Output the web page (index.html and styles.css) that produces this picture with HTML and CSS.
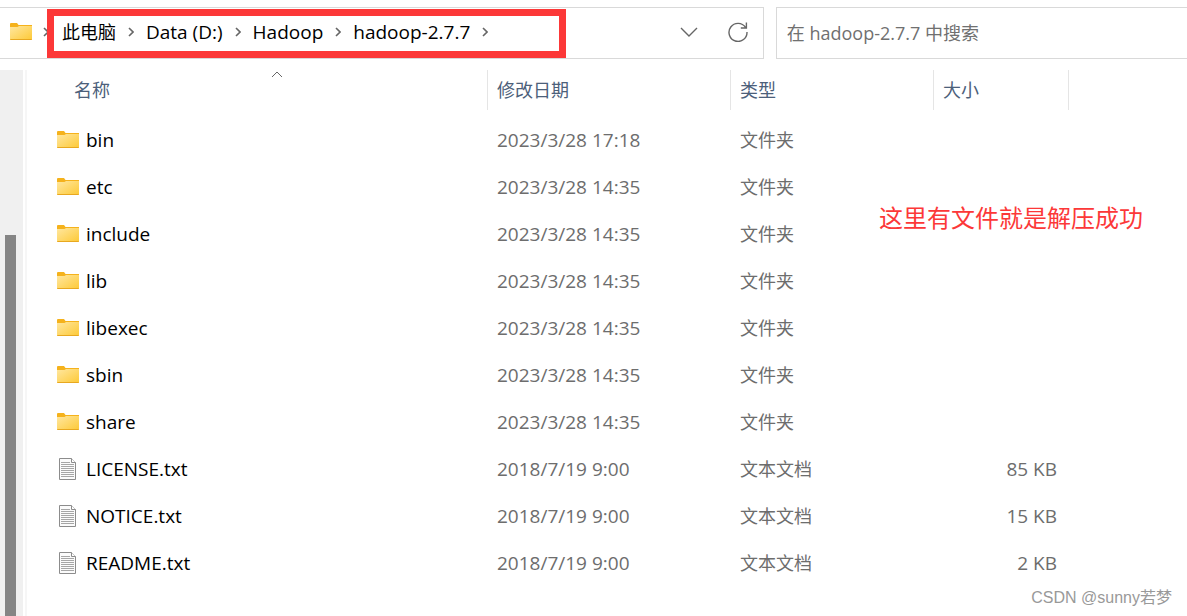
FILE: index.html
```html
<!DOCTYPE html>
<html lang="zh-CN">
<head>
    <meta charset="UTF-8">
    <meta name="viewport" content="width=device-width, initial-scale=1.0">
    <title>hadoop-2.7.7</title>
    <link rel="stylesheet" href="styles.css">
</head>
<body>
    <!-- shared icons -->
    <svg class="sprite" aria-hidden="true">
        <defs>
            <linearGradient id="folderFill" x1="0" y1="0" x2="1" y2="1">
                <stop offset="0" stop-color="#ffe7a0"/>
                <stop offset="1" stop-color="#fdc936"/>
            </linearGradient>
            <symbol id="folder" viewBox="0 0 22 17">
                <path d="M0 1q0-1 1-1h6l1.500 2H22v3H0z" fill="#f5b21c"/>
                <path d="M0 4h7.500L9 3h13v13q0 1-1 1H1q-1 0-1-1z" fill="url(#folderFill)"/>
                <path d="M0 16h22q0 1-1 1H1q-1 0-1-1z" fill="#e8a820"/>
            </symbol>
            <symbol id="text" viewBox="0 0 17 22">
                <path d="M.5.5h12l4 4v17H.5z" fill="#fbfbfb" stroke="#8c8c8c"/>
                <path d="M12.5.5v4h4" fill="#fff" stroke="#8c8c8c"/>
                <path d="M2 4.500h9M2 6.500h13M2 8.500h13M2 10.500h13M2 12.500h13M2 14.500h13M2 16.500h13M2 18.500h13" stroke="#a6a6a6"/>
            </symbol>
            <symbol id="chevron" viewBox="0 0 6 10">
                <path d="M1 1l4 4-4 4" fill="none" stroke="#666" stroke-width="1.6"/>
            </symbol>
        </defs>
    </svg>

    <header class="toolbar">
        <div class="address">
            <svg class="folder-icon"><use href="#folder"/></svg>
            <svg class="chevron first"><use href="#chevron"/></svg>
            <nav class="crumbs">
                <a class="zh" href="#">此电脑</a>
                <svg class="chevron"><use href="#chevron"/></svg>
                <a href="#">Data (D:)</a>
                <svg class="chevron"><use href="#chevron"/></svg>
                <a href="#">Hadoop</a>
                <svg class="chevron"><use href="#chevron"/></svg>
                <a href="#">hadoop-2.7.7</a>
                <svg class="chevron"><use href="#chevron"/></svg>
            </nav>
            <div class="actions">
                <button type="button" aria-label="历史记录">
                    <svg width="18" height="10" viewBox="0 0 18 10"><path d="M1 1l8 8 8-8" fill="none" stroke="#666" stroke-width="1.4"/></svg>
                </button>
                <button type="button" aria-label="刷新">
                    <svg width="20" height="20" viewBox="0 0 20 20"><path d="M17.500 5.400A9 9 0 1 0 19 10M18.400 .5v5.500h-5.600" fill="none" stroke="#666" stroke-width="1.4"/></svg>
                </button>
            </div>
        </div>
        <input class="search" type="search" placeholder="在 hadoop-2.7.7 中搜索" aria-label="搜索">
    </header>

    <main class="content">
        <div class="scrollbar"><div class="thumb"></div></div>
        <table class="files">
            <colgroup>
                <col class="col-name">
                <col class="col-date">
                <col class="col-type">
                <col class="col-size">
            </colgroup>
            <thead>
                <tr>
                    <th class="sorted">
                        <button type="button">名称
                            <svg class="caret" viewBox="0 0 12 7"><path d="M1 6l5-5 5 5" fill="none" stroke="#666"/></svg>
                        </button>
                    </th>
                    <th><button type="button">修改日期</button></th>
                    <th><button type="button">类型</button></th>
                    <th><button type="button">大小</button></th>
                </tr>
            </thead>
            <tbody>
                <tr><td><div class="name"><svg class="folder-icon"><use href="#folder"/></svg>bin</div></td><td>2023/3/28 17:18</td><td class="zh">文件夹</td><td></td></tr>
                <tr><td><div class="name"><svg class="folder-icon"><use href="#folder"/></svg>etc</div></td><td>2023/3/28 14:35</td><td class="zh">文件夹</td><td></td></tr>
                <tr><td><div class="name"><svg class="folder-icon"><use href="#folder"/></svg>include</div></td><td>2023/3/28 14:35</td><td class="zh">文件夹</td><td></td></tr>
                <tr><td><div class="name"><svg class="folder-icon"><use href="#folder"/></svg>lib</div></td><td>2023/3/28 14:35</td><td class="zh">文件夹</td><td></td></tr>
                <tr><td><div class="name"><svg class="folder-icon"><use href="#folder"/></svg>libexec</div></td><td>2023/3/28 14:35</td><td class="zh">文件夹</td><td></td></tr>
                <tr><td><div class="name"><svg class="folder-icon"><use href="#folder"/></svg>sbin</div></td><td>2023/3/28 14:35</td><td class="zh">文件夹</td><td></td></tr>
                <tr><td><div class="name"><svg class="folder-icon"><use href="#folder"/></svg>share</div></td><td>2023/3/28 14:35</td><td class="zh">文件夹</td><td></td></tr>
                <tr><td><div class="name"><svg class="text-icon"><use href="#text"/></svg>LICENSE.txt</div></td><td>2018/7/19 9:00</td><td class="zh">文本文档</td><td class="size">85 KB</td></tr>
                <tr><td><div class="name"><svg class="text-icon"><use href="#text"/></svg>NOTICE.txt</div></td><td>2018/7/19 9:00</td><td class="zh">文本文档</td><td class="size">15 KB</td></tr>
                <tr><td><div class="name"><svg class="text-icon"><use href="#text"/></svg>README.txt</div></td><td>2018/7/19 9:00</td><td class="zh">文本文档</td><td class="size">2 KB</td></tr>
            </tbody>
        </table>
        <p class="note">这里有文件就是解压成功</p>
        <p class="watermark">CSDN @sunny若梦</p>
    </main>
</body>
</html>
```
FILE: styles.css
```css
* {
    box-sizing: border-box;
}

body {
    margin: 0;
    min-height: 100vh;
    display: flex;
    flex-direction: column;
    background-color: #fff;
    color: #000;
    font-family: "Open Sans", "Noto Sans CJK SC", sans-serif;
    font-size: 19px;
    line-height: 26px;
}

button {
    padding: 0;
    border: none;
    background: none;
    font: inherit;
    color: inherit;
}

.sprite {
    position: absolute;
    width: 0;
    height: 0;
}

.zh {
    font-size: 18px;
}

.folder-icon {
    width: 22px;
    height: 17px;
    flex: none;
}

.text-icon {
    width: 17px;
    height: 22px;
    margin: 0 3px 0 2px;
    flex: none;
}

.chevron {
    width: 6px;
    height: 10px;
    flex: none;
}

/* address bar and search */
.toolbar {
    display: grid;
    grid-template-columns: 13fr 7fr;
    gap: 12px;
    padding-top: 7px;
}

.address {
    display: flex;
    align-items: center;
    height: 52px;
    padding: 0 0 3px 10px;
    border: 1px solid #d9d9d9;
    border-left: none;
}

.first {
    margin-left: 11px;
    margin-right: -2px;
}

.crumbs {
    display: flex;
    align-items: center;
    align-self: flex-end;
    gap: 12px;
    width: 519px;
    height: 49px;
    margin-bottom: -3px;
    padding: 0 0 3px 8px;
    border: 7px solid #fc3838;
    background-color: #fff;
    position: relative;
    white-space: nowrap;
}

.crumbs a {
    color: inherit;
    text-decoration: none;
}

.actions {
    display: flex;
    align-items: center;
    gap: 30px;
    margin-left: auto;
    padding-right: 15px;
}

.actions svg {
    display: block;
}

.search {
    width: 100%;
    height: 52px;
    padding: 0 10px;
    border: 1px solid #d9d9d9;
    border-right: none;
    border-radius: 0;
    outline: none;
    background: none;
    font: inherit;
    font-size: 18px;
    appearance: none;
}

.search::placeholder {
    color: #707070;
}

/* file list */
.content {
    position: relative;
    flex: 1;
    display: flex;
    align-items: stretch;
    margin-top: 11px;
}

.scrollbar {
    display: flex;
    flex: none;
    width: 27px;
    padding: 165px 0 0 5px;
    background: linear-gradient(to right, #f0f0f0 23px, #fff 23px, #fff 25px, #f6f6f6 25px);
}

.thumb {
    width: 11px;
    background-color: #858585;
}

.files {
    align-self: flex-start;
    width: 1042px;
    table-layout: fixed;
    border-collapse: separate;
    border-spacing: 0;
    color: #6d6d6d;
}

.col-name {
    width: 461px;
}

.col-date {
    width: 243px;
}

.col-type {
    width: 203px;
}

.col-size {
    width: 135px;
}

.files th {
    height: 40px;
    padding: 0 0 0 9px;
    border-right: 1px solid #e5e5e5;
    color: #4c607a;
    font-size: 18px;
    font-weight: 400;
    text-align: left;
}

.files th button {
    display: block;
    width: 100%;
    height: 40px;
    text-align: left;
}

.files .sorted {
    padding-left: 40px;
}

.files .sorted button {
    position: relative;
    padding-left: 7px;
}

.caret {
    position: absolute;
    top: 1px;
    left: calc(50% - 6px);
    width: 12px;
    height: 7px;
}

.files tbody::before {
    content: "";
    display: block;
    height: 6px;
}

.files td {
    height: 47px;
    padding: 0 0 0 9px;
}

.files td:first-child {
    padding-left: 30px;
}

.name {
    display: flex;
    align-items: center;
    gap: 7px;
    color: #000;
}

.files .size {
    padding-right: 12px;
    text-align: right;
}

.note {
    position: absolute;
    top: 132px;
    right: 44px;
    margin: 0;
    color: #fc3838;
    font-size: 24px;
    line-height: 32px;
}

.watermark {
    position: absolute;
    right: 15px;
    bottom: 5px;
    margin: 0;
    color: #999;
    font-family: "Liberation Sans", "Noto Sans CJK SC", sans-serif;
    font-size: 16px;
}
```
